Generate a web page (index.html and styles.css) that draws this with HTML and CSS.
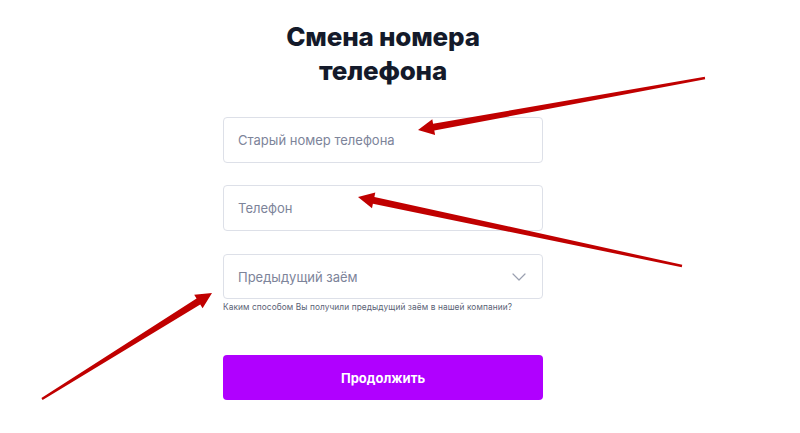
FILE: index.html
```html
<!DOCTYPE html>
<html lang="ru">
<head>
<meta charset="utf-8">
<title>Смена номера телефона</title>
<link rel="stylesheet" href="styles.css">
</head>
<body>
<div class="page">
  <main class="form">
    <h1 class="title">Смена номера<br>телефона</h1>
    <div class="field"><span class="placeholder">Старый номер телефона</span></div>
    <div class="field"><span class="placeholder">Телефон</span></div>
    <div class="select-group">
      <div class="field select">
        <span class="placeholder">Предыдущий заём</span>
        <svg class="chevron" width="14" height="8" viewBox="0 0 14 8"><path d="M1 1l6 6 6-6" fill="none" stroke="#9aa0b0" stroke-width="1.2" stroke-linecap="round" stroke-linejoin="round"/></svg>
      </div>
      <p class="hint">Каким способом Вы получили предыдущий заём в нашей компании?</p>
    </div>
    <button class="submit">Продолжить</button>
  </main>
</div>
<svg class="arrows" width="800" height="433" viewBox="0 0 800 433">
  <polygon fill="#c00000" points="705.2,79.2 434.3,130.6 435.1,135.1 418,130 432.3,119.3 433.1,123.8 704.8,76.8"/>
  <polygon fill="#c00000" points="681.75,267.2 372.9,203.8 372.0,208.2 358,197 375.3,192.5 374.4,196.9 682.25,264.8"/>
  <polygon fill="#c00000" points="41.4,398.0 196.55,298.5 194.2,294.7 212,293 202.6,308.3 200.25,304.5 42.6,400.0"/>
</svg>
</body>
</html>
```
FILE: styles.css
```css
html, body {
  margin: 0;
  padding: 0;
  background: #ffffff;
  font-family: Inter, "Noto Sans", sans-serif;
}
.page {
  display: flex;
  justify-content: center;
  padding-right: 34px;
}
.form {
  width: 320px;
  display: flex;
  flex-direction: column;
}
.title {
  margin: 20px 0 0;
  font-size: 26px;
  line-height: 34px;
  font-weight: 800;
  color: #141a2a;
  text-align: center;
  letter-spacing: -0.2px;
}
.field {
  box-sizing: border-box;
  height: 46px;
  border: 1px solid #dde0e8;
  border-radius: 4px;
  display: flex;
  align-items: center;
  padding: 0 14px;
  margin-top: 22px;
}
.form .title + .field {
  margin-top: 29px;
}
.placeholder {
  font-size: 13px;
  color: #7d849a;
}
.select-group {
  margin-top: 23px;
}
.select-group .field {
  margin-top: 0;
  height: 45px;
  justify-content: space-between;
}
.chevron {
  margin-right: 2px;
}
.hint {
  margin: 3px 0 0;
  font-size: 8.3px;
  letter-spacing: 0.1px;
  color: #5a6275;
}
.submit {
  margin-top: 43px;
  height: 45px;
  border: none;
  border-radius: 4px;
  background: #b000ff;
  color: #ffffff;
  font-family: Inter, "Noto Sans", sans-serif;
  font-weight: 700;
  font-size: 13px;
}
.arrows {
  position: absolute;
  left: 0;
  top: 0;
  pointer-events: none;
}
```
